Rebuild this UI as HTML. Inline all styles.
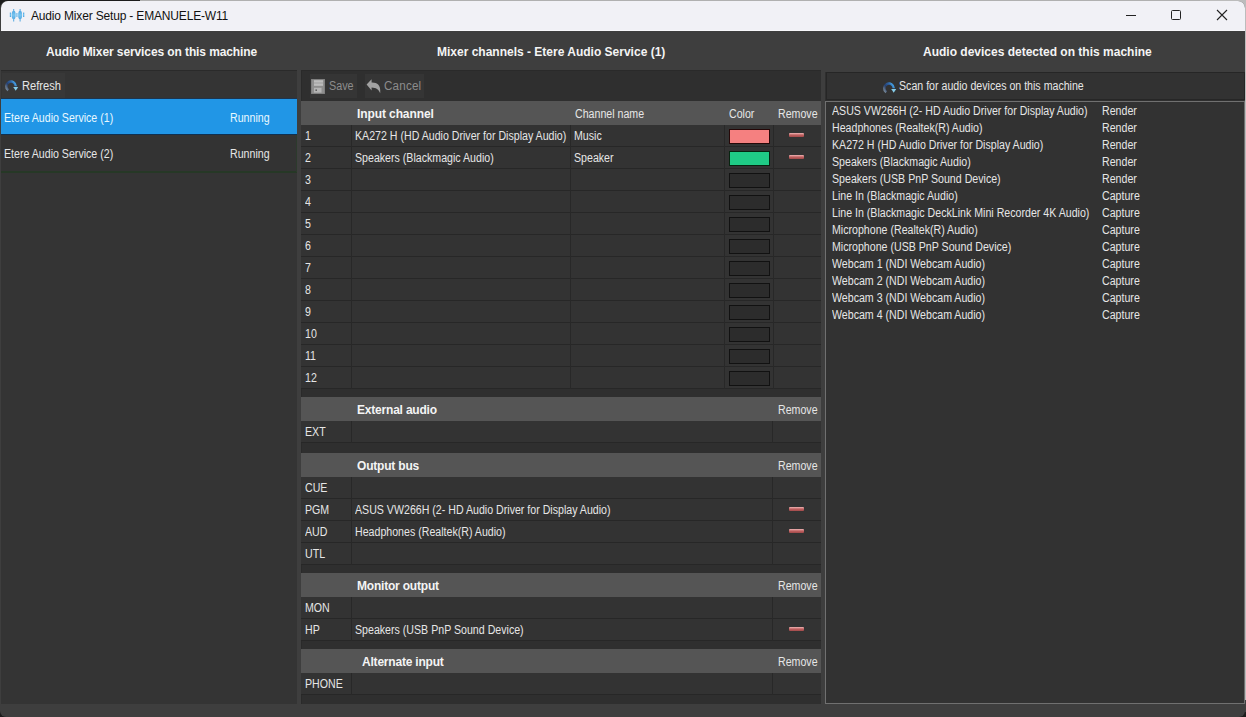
<!DOCTYPE html><html><head><meta charset="utf-8"><style>
*{margin:0;padding:0;box-sizing:border-box}
html,body{width:1246px;height:717px;overflow:hidden;background:#c9c9c9;font-family:"Liberation Sans",sans-serif;position:relative}
.a{position:absolute}
.t{position:absolute;white-space:nowrap;font-size:12px;color:#e6e6e6;line-height:14px;transform:scaleX(0.885);transform-origin:0 0}
.hb{position:absolute;white-space:nowrap;font-size:12px;font-weight:bold;color:#f4f4f4;letter-spacing:-0.15px;line-height:14px}
.sw{position:absolute;width:41px;height:15px;border:1px solid #111}
.rm{position:absolute;width:15px;height:4px;background:linear-gradient(#f0b8b8,#c06060 50%,#a04a4a);border-radius:1px}
</style></head><body>
<div class="a" style="left:0px;top:0px;width:1246px;height:717px;background:#1c1c1c;"></div>
<div class="a" style="left:1245px;top:0px;width:1px;height:700px;background:#bcbcbc;"></div>
<div class="a" style="left:140px;top:0px;width:1106px;height:1px;background:#b0b0b0;"></div>
<div class="a" style="left:1200px;top:0px;width:46px;height:30px;background:#bcbcbc;"></div>
<div class="a" style="left:0px;top:1px;width:1245px;height:716px;background:#3e3e3e;border-radius:7px 7px 6px 6px"></div>
<div class="a" style="left:1240px;top:700px;width:6px;height:12px;background:#3e3e3e;"></div>
<div class="a" style="left:1px;top:1px;width:1244px;height:30px;background:#f1f1f6;border-radius:7px 7px 0 0"></div>
<div class="a" style="left:1px;top:30px;width:1244px;height:1px;background:#f7f7fa;"></div>
<svg class="a" style="left:0;top:0" width="30" height="30" viewBox="0 0 30 30"><defs><linearGradient id="wg" x1="0" y1="0" x2="0" y2="1"><stop offset="0" stop-color="#4aa3de"/><stop offset=".5" stop-color="#78c4f0"/><stop offset="1" stop-color="#4aa3de"/></linearGradient></defs><g fill="url(#wg)"><rect x="9.8" y="12.6" width="1.3" height="4.4"/><ellipse cx="13.7" cy="15" rx="2" ry="4.3"/><rect x="13.2" y="9" width="1" height="12.5"/><rect x="16.3" y="13.2" width="1.2" height="3.6"/><ellipse cx="20.1" cy="15" rx="2" ry="4.3"/><rect x="19.6" y="9" width="1" height="12.5"/><rect x="23" y="12.6" width="1.3" height="4.4"/></g></svg>
<div class="a" style="left:31px;top:9px;font-size:12px;color:#111;white-space:nowrap;letter-spacing:-0.17px;line-height:14px">Audio Mixer Setup - EMANUELE-W11</div>
<div class="a" style="left:1126px;top:15px;width:10px;height:1px;background:#222;"></div>
<div class="a" style="left:1171px;top:10px;width:10px;height:10px;border:1px solid #222;border-radius:1.5px"></div>
<svg class="a" style="left:1216px;top:9px" width="12" height="12" viewBox="0 0 12 12"><path d="M1 1L11 11M11 1L1 11" stroke="#222" stroke-width="1.1"/></svg>
<div class="hb" style="left:46px;top:45px;letter-spacing:-0.1px">Audio Mixer services on this machine</div>
<div class="hb" style="left:437px;top:45px;letter-spacing:0">Mixer channels - Etere Audio Service (1)</div>
<div class="hb" style="left:923px;top:45px;letter-spacing:0">Audio devices detected on this machine</div>
<div class="a" style="left:1px;top:70px;width:296px;height:634px;background:#343434;"></div>
<div class="a" style="left:1px;top:70px;width:296px;height:1px;background:#2a2a2a;"></div>
<div class="a" style="left:2px;top:73px;width:63px;height:25px;background:#383838;"></div>
<svg class="a" style="left:2px;top:77px" width="20" height="20" viewBox="0 0 20 20"><defs><linearGradient id="rg2" x1="0" y1="1" x2="1" y2="0.4"><stop offset="0" stop-color="#80909c"/><stop offset=".4" stop-color="#263f6e"/><stop offset=".8" stop-color="#2e64a6"/><stop offset="1" stop-color="#4196d8"/></linearGradient></defs><path d="M6.30 13.15A4.7 4.7 0 1 1 13.70 9.30" fill="none" stroke="url(#rg2)" stroke-width="2.5"/><path d="M11.20 9.90H16.20L13.70 13.70Z" fill="#86cce8"/></svg>
<div class="t" style="left:22px;top:79px;transform:scaleX(0.93)">Refresh</div>
<div class="a" style="left:1px;top:98px;width:296px;height:1px;background:#1c3550;"></div>
<div class="a" style="left:1px;top:99px;width:296px;height:36px;background:#2196e6;"></div>
<div class="a" style="left:1px;top:134px;width:296px;height:1px;background:#0f3050;"></div>
<div class="t" style="left:4px;top:111px;color:#e8f8ff">Etere Audio Service (1)</div>
<div class="t" style="left:230px;top:111px;color:#e8f8ff">Running</div>
<div class="a" style="left:1px;top:135px;width:296px;height:36px;background:#333333;"></div>
<div class="t" style="left:4px;top:147px;">Etere Audio Service (2)</div>
<div class="t" style="left:230px;top:147px;">Running</div>
<div class="a" style="left:1px;top:171px;width:296px;height:2px;background:#263826;"></div>
<div class="a" style="left:296px;top:135px;width:1px;height:37px;background:#2c3a2c;"></div>
<div class="a" style="left:301px;top:70px;width:520px;height:634px;background:#2f2f2f;"></div>
<div class="a" style="left:301px;top:70px;width:520px;height:1px;background:#2a2a2a;"></div>
<div class="a" style="left:301px;top:70px;width:1px;height:634px;background:#2a2a2a;"></div>
<div class="a" style="left:310px;top:74px;width:47px;height:24px;background:#353535;"></div>
<svg class="a" style="left:311px;top:79px" width="14" height="15" viewBox="0 0 14 15"><rect x="0" y="0" width="14" height="15" fill="#7a7a7a"/><rect x="0.7" y="0.7" width="12.6" height="13.6" fill="#8e8e8e"/><rect x="3" y="1.2" width="9" height="5.6" fill="#bdbdbd"/><rect x="3" y="3.6" width="9" height="0.8" fill="#9a9a9a"/><rect x="3" y="8.8" width="7.5" height="4.8" fill="#b5b5b5"/><rect x="4.5" y="10.4" width="1.4" height="1.6" fill="#555"/></svg>
<div class="t" style="left:329px;top:79px;color:#8c8c8c;transform:scaleX(0.9)">Save</div>
<div class="a" style="left:365px;top:74px;width:59px;height:24px;background:#353535;"></div>
<svg class="a" style="left:366px;top:78px" width="16" height="16" viewBox="0 0 16 16"><path d="M0.6 6.6L5.6 1.2V4.6C11 4.4 15 7 14.2 15.2C12.8 11.2 10 9.6 5.6 9.4V12.4Z" fill="#a2a2a2"/></svg>
<div class="t" style="left:384px;top:79px;color:#8c8c8c;transform:scaleX(0.97);letter-spacing:0.2px">Cancel</div>
<div class="a" style="left:301px;top:101px;width:520px;height:24px;background:#555555;"></div>
<div class="hb" style="left:357px;top:107px;letter-spacing:-0.1px">Input channel</div>
<div class="t" style="left:575px;top:107px;">Channel name</div>
<div class="t" style="left:729px;top:107px;">Color</div>
<div class="t" style="left:778px;top:107px;">Remove</div>
<div class="a" style="left:301px;top:125px;width:520px;height:22px;background:#333333;"></div>
<div class="a" style="left:301px;top:146px;width:520px;height:1px;background:#272727;"></div>
<div class="a" style="left:351px;top:125px;width:1px;height:22px;background:#282828;"></div>
<div class="a" style="left:570px;top:125px;width:1px;height:22px;background:#282828;"></div>
<div class="a" style="left:724px;top:125px;width:1px;height:22px;background:#282828;"></div>
<div class="a" style="left:773px;top:125px;width:1px;height:22px;background:#282828;"></div>
<div class="t" style="left:305px;top:129px;">1</div>
<div class="t" style="left:355px;top:129px;">KA272 H (HD Audio Driver for Display Audio)</div>
<div class="t" style="left:574px;top:129px;">Music</div>
<div class="sw" style="left:729px;top:129px;background:#f58080;border-color:#260808"></div>
<div class="rm" style="left:789px;top:133px"></div>
<div class="a" style="left:301px;top:147px;width:520px;height:22px;background:#333333;"></div>
<div class="a" style="left:301px;top:168px;width:520px;height:1px;background:#272727;"></div>
<div class="a" style="left:351px;top:147px;width:1px;height:22px;background:#282828;"></div>
<div class="a" style="left:570px;top:147px;width:1px;height:22px;background:#282828;"></div>
<div class="a" style="left:724px;top:147px;width:1px;height:22px;background:#282828;"></div>
<div class="a" style="left:773px;top:147px;width:1px;height:22px;background:#282828;"></div>
<div class="t" style="left:305px;top:151px;">2</div>
<div class="t" style="left:355px;top:151px;">Speakers (Blackmagic Audio)</div>
<div class="t" style="left:574px;top:151px;">Speaker</div>
<div class="sw" style="left:729px;top:151px;background:#1fcb86;border-color:#062410"></div>
<div class="rm" style="left:789px;top:155px"></div>
<div class="a" style="left:301px;top:169px;width:520px;height:22px;background:#333333;"></div>
<div class="a" style="left:301px;top:190px;width:520px;height:1px;background:#272727;"></div>
<div class="a" style="left:351px;top:169px;width:1px;height:22px;background:#282828;"></div>
<div class="a" style="left:570px;top:169px;width:1px;height:22px;background:#282828;"></div>
<div class="a" style="left:724px;top:169px;width:1px;height:22px;background:#282828;"></div>
<div class="a" style="left:773px;top:169px;width:1px;height:22px;background:#282828;"></div>
<div class="t" style="left:305px;top:173px;">3</div>
<div class="sw" style="left:729px;top:173px;background:#2c2c2c"></div>
<div class="a" style="left:301px;top:191px;width:520px;height:22px;background:#333333;"></div>
<div class="a" style="left:301px;top:212px;width:520px;height:1px;background:#272727;"></div>
<div class="a" style="left:351px;top:191px;width:1px;height:22px;background:#282828;"></div>
<div class="a" style="left:570px;top:191px;width:1px;height:22px;background:#282828;"></div>
<div class="a" style="left:724px;top:191px;width:1px;height:22px;background:#282828;"></div>
<div class="a" style="left:773px;top:191px;width:1px;height:22px;background:#282828;"></div>
<div class="t" style="left:305px;top:195px;">4</div>
<div class="sw" style="left:729px;top:195px;background:#2c2c2c"></div>
<div class="a" style="left:301px;top:213px;width:520px;height:22px;background:#333333;"></div>
<div class="a" style="left:301px;top:234px;width:520px;height:1px;background:#272727;"></div>
<div class="a" style="left:351px;top:213px;width:1px;height:22px;background:#282828;"></div>
<div class="a" style="left:570px;top:213px;width:1px;height:22px;background:#282828;"></div>
<div class="a" style="left:724px;top:213px;width:1px;height:22px;background:#282828;"></div>
<div class="a" style="left:773px;top:213px;width:1px;height:22px;background:#282828;"></div>
<div class="t" style="left:305px;top:217px;">5</div>
<div class="sw" style="left:729px;top:217px;background:#2c2c2c"></div>
<div class="a" style="left:301px;top:235px;width:520px;height:22px;background:#333333;"></div>
<div class="a" style="left:301px;top:256px;width:520px;height:1px;background:#272727;"></div>
<div class="a" style="left:351px;top:235px;width:1px;height:22px;background:#282828;"></div>
<div class="a" style="left:570px;top:235px;width:1px;height:22px;background:#282828;"></div>
<div class="a" style="left:724px;top:235px;width:1px;height:22px;background:#282828;"></div>
<div class="a" style="left:773px;top:235px;width:1px;height:22px;background:#282828;"></div>
<div class="t" style="left:305px;top:239px;">6</div>
<div class="sw" style="left:729px;top:239px;background:#2c2c2c"></div>
<div class="a" style="left:301px;top:257px;width:520px;height:22px;background:#333333;"></div>
<div class="a" style="left:301px;top:278px;width:520px;height:1px;background:#272727;"></div>
<div class="a" style="left:351px;top:257px;width:1px;height:22px;background:#282828;"></div>
<div class="a" style="left:570px;top:257px;width:1px;height:22px;background:#282828;"></div>
<div class="a" style="left:724px;top:257px;width:1px;height:22px;background:#282828;"></div>
<div class="a" style="left:773px;top:257px;width:1px;height:22px;background:#282828;"></div>
<div class="t" style="left:305px;top:261px;">7</div>
<div class="sw" style="left:729px;top:261px;background:#2c2c2c"></div>
<div class="a" style="left:301px;top:279px;width:520px;height:22px;background:#333333;"></div>
<div class="a" style="left:301px;top:300px;width:520px;height:1px;background:#272727;"></div>
<div class="a" style="left:351px;top:279px;width:1px;height:22px;background:#282828;"></div>
<div class="a" style="left:570px;top:279px;width:1px;height:22px;background:#282828;"></div>
<div class="a" style="left:724px;top:279px;width:1px;height:22px;background:#282828;"></div>
<div class="a" style="left:773px;top:279px;width:1px;height:22px;background:#282828;"></div>
<div class="t" style="left:305px;top:283px;">8</div>
<div class="sw" style="left:729px;top:283px;background:#2c2c2c"></div>
<div class="a" style="left:301px;top:301px;width:520px;height:22px;background:#333333;"></div>
<div class="a" style="left:301px;top:322px;width:520px;height:1px;background:#272727;"></div>
<div class="a" style="left:351px;top:301px;width:1px;height:22px;background:#282828;"></div>
<div class="a" style="left:570px;top:301px;width:1px;height:22px;background:#282828;"></div>
<div class="a" style="left:724px;top:301px;width:1px;height:22px;background:#282828;"></div>
<div class="a" style="left:773px;top:301px;width:1px;height:22px;background:#282828;"></div>
<div class="t" style="left:305px;top:305px;">9</div>
<div class="sw" style="left:729px;top:305px;background:#2c2c2c"></div>
<div class="a" style="left:301px;top:323px;width:520px;height:22px;background:#333333;"></div>
<div class="a" style="left:301px;top:344px;width:520px;height:1px;background:#272727;"></div>
<div class="a" style="left:351px;top:323px;width:1px;height:22px;background:#282828;"></div>
<div class="a" style="left:570px;top:323px;width:1px;height:22px;background:#282828;"></div>
<div class="a" style="left:724px;top:323px;width:1px;height:22px;background:#282828;"></div>
<div class="a" style="left:773px;top:323px;width:1px;height:22px;background:#282828;"></div>
<div class="t" style="left:305px;top:327px;">10</div>
<div class="sw" style="left:729px;top:327px;background:#2c2c2c"></div>
<div class="a" style="left:301px;top:345px;width:520px;height:22px;background:#333333;"></div>
<div class="a" style="left:301px;top:366px;width:520px;height:1px;background:#272727;"></div>
<div class="a" style="left:351px;top:345px;width:1px;height:22px;background:#282828;"></div>
<div class="a" style="left:570px;top:345px;width:1px;height:22px;background:#282828;"></div>
<div class="a" style="left:724px;top:345px;width:1px;height:22px;background:#282828;"></div>
<div class="a" style="left:773px;top:345px;width:1px;height:22px;background:#282828;"></div>
<div class="t" style="left:305px;top:349px;">11</div>
<div class="sw" style="left:729px;top:349px;background:#2c2c2c"></div>
<div class="a" style="left:301px;top:367px;width:520px;height:22px;background:#333333;"></div>
<div class="a" style="left:301px;top:388px;width:520px;height:1px;background:#272727;"></div>
<div class="a" style="left:351px;top:367px;width:1px;height:22px;background:#282828;"></div>
<div class="a" style="left:570px;top:367px;width:1px;height:22px;background:#282828;"></div>
<div class="a" style="left:724px;top:367px;width:1px;height:22px;background:#282828;"></div>
<div class="a" style="left:773px;top:367px;width:1px;height:22px;background:#282828;"></div>
<div class="t" style="left:305px;top:371px;">12</div>
<div class="sw" style="left:729px;top:371px;background:#2c2c2c"></div>
<div class="a" style="left:301px;top:397px;width:520px;height:24px;background:#555555;"></div>
<div class="hb" style="left:357px;top:403px;letter-spacing:-0.2px">External audio</div>
<div class="t" style="left:778px;top:403px;">Remove</div>
<div class="a" style="left:301px;top:421px;width:520px;height:22px;background:#333333;"></div>
<div class="a" style="left:301px;top:442px;width:520px;height:1px;background:#272727;"></div>
<div class="a" style="left:351px;top:421px;width:1px;height:22px;background:#282828;"></div>
<div class="a" style="left:772px;top:421px;width:1px;height:22px;background:#282828;"></div>
<div class="t" style="left:305px;top:425px;">EXT</div>
<div class="a" style="left:301px;top:453px;width:520px;height:24px;background:#555555;"></div>
<div class="hb" style="left:357px;top:459px;letter-spacing:-0.2px">Output bus</div>
<div class="t" style="left:778px;top:459px;">Remove</div>
<div class="a" style="left:301px;top:477px;width:520px;height:22px;background:#333333;"></div>
<div class="a" style="left:301px;top:498px;width:520px;height:1px;background:#272727;"></div>
<div class="a" style="left:351px;top:477px;width:1px;height:22px;background:#282828;"></div>
<div class="a" style="left:772px;top:477px;width:1px;height:22px;background:#282828;"></div>
<div class="t" style="left:305px;top:481px;">CUE</div>
<div class="a" style="left:301px;top:499px;width:520px;height:22px;background:#333333;"></div>
<div class="a" style="left:301px;top:520px;width:520px;height:1px;background:#272727;"></div>
<div class="a" style="left:351px;top:499px;width:1px;height:22px;background:#282828;"></div>
<div class="a" style="left:772px;top:499px;width:1px;height:22px;background:#282828;"></div>
<div class="t" style="left:305px;top:503px;">PGM</div>
<div class="t" style="left:355px;top:503px;">ASUS VW266H (2- HD Audio Driver for Display Audio)</div>
<div class="rm" style="left:789px;top:507px"></div>
<div class="a" style="left:301px;top:521px;width:520px;height:22px;background:#333333;"></div>
<div class="a" style="left:301px;top:542px;width:520px;height:1px;background:#272727;"></div>
<div class="a" style="left:351px;top:521px;width:1px;height:22px;background:#282828;"></div>
<div class="a" style="left:772px;top:521px;width:1px;height:22px;background:#282828;"></div>
<div class="t" style="left:305px;top:525px;">AUD</div>
<div class="t" style="left:355px;top:525px;">Headphones (Realtek(R) Audio)</div>
<div class="rm" style="left:789px;top:529px"></div>
<div class="a" style="left:301px;top:543px;width:520px;height:22px;background:#333333;"></div>
<div class="a" style="left:301px;top:564px;width:520px;height:1px;background:#272727;"></div>
<div class="a" style="left:351px;top:543px;width:1px;height:22px;background:#282828;"></div>
<div class="a" style="left:772px;top:543px;width:1px;height:22px;background:#282828;"></div>
<div class="t" style="left:305px;top:547px;">UTL</div>
<div class="a" style="left:301px;top:573px;width:520px;height:24px;background:#555555;"></div>
<div class="hb" style="left:357px;top:579px;letter-spacing:-0.2px">Monitor output</div>
<div class="t" style="left:778px;top:579px;">Remove</div>
<div class="a" style="left:301px;top:597px;width:520px;height:22px;background:#333333;"></div>
<div class="a" style="left:301px;top:618px;width:520px;height:1px;background:#272727;"></div>
<div class="a" style="left:351px;top:597px;width:1px;height:22px;background:#282828;"></div>
<div class="a" style="left:772px;top:597px;width:1px;height:22px;background:#282828;"></div>
<div class="t" style="left:305px;top:601px;">MON</div>
<div class="a" style="left:301px;top:619px;width:520px;height:22px;background:#333333;"></div>
<div class="a" style="left:301px;top:640px;width:520px;height:1px;background:#272727;"></div>
<div class="a" style="left:351px;top:619px;width:1px;height:22px;background:#282828;"></div>
<div class="a" style="left:772px;top:619px;width:1px;height:22px;background:#282828;"></div>
<div class="t" style="left:305px;top:623px;">HP</div>
<div class="t" style="left:355px;top:623px;">Speakers (USB PnP Sound Device)</div>
<div class="rm" style="left:789px;top:627px"></div>
<div class="a" style="left:301px;top:649px;width:520px;height:24px;background:#555555;"></div>
<div class="hb" style="left:362px;top:655px;letter-spacing:-0.2px">Alternate input</div>
<div class="t" style="left:778px;top:655px;">Remove</div>
<div class="a" style="left:301px;top:673px;width:520px;height:22px;background:#333333;"></div>
<div class="a" style="left:301px;top:694px;width:520px;height:1px;background:#272727;"></div>
<div class="a" style="left:351px;top:673px;width:1px;height:22px;background:#282828;"></div>
<div class="a" style="left:772px;top:673px;width:1px;height:22px;background:#282828;"></div>
<div class="t" style="left:305px;top:677px;">PHONE</div>
<div class="a" style="left:825px;top:72px;width:419px;height:632px;background:#2f2f2f;"></div>
<div class="a" style="left:826px;top:72px;width:419px;height:28px;background:#323232;border:1px solid #262626"></div>
<svg class="a" style="left:880px;top:78.5px" width="20" height="20" viewBox="0 0 20 20"><defs><linearGradient id="rg880" x1="0" y1="1" x2="1" y2="0.4"><stop offset="0" stop-color="#80909c"/><stop offset=".4" stop-color="#263f6e"/><stop offset=".8" stop-color="#2e64a6"/><stop offset="1" stop-color="#4196d8"/></linearGradient></defs><path d="M6.30 13.15A4.7 4.7 0 1 1 13.70 9.30" fill="none" stroke="url(#rg880)" stroke-width="2.5"/><path d="M11.20 9.90H16.20L13.70 13.70Z" fill="#86cce8"/></svg>
<div class="t" style="left:899px;top:79px;">Scan for audio devices on this machine</div>
<div class="a" style="left:825px;top:101px;width:420px;height:603px;background:#323232;border:1px solid #707070"></div>
<div class="t" style="left:832px;top:104px;">ASUS VW266H (2- HD Audio Driver for Display Audio)</div>
<div class="t" style="left:1102px;top:104px;">Render</div>
<div class="t" style="left:832px;top:121px;">Headphones (Realtek(R) Audio)</div>
<div class="t" style="left:1102px;top:121px;">Render</div>
<div class="t" style="left:832px;top:138px;">KA272 H (HD Audio Driver for Display Audio)</div>
<div class="t" style="left:1102px;top:138px;">Render</div>
<div class="t" style="left:832px;top:155px;">Speakers (Blackmagic Audio)</div>
<div class="t" style="left:1102px;top:155px;">Render</div>
<div class="t" style="left:832px;top:172px;">Speakers (USB PnP Sound Device)</div>
<div class="t" style="left:1102px;top:172px;">Render</div>
<div class="t" style="left:832px;top:189px;">Line In (Blackmagic Audio)</div>
<div class="t" style="left:1102px;top:189px;">Capture</div>
<div class="t" style="left:832px;top:206px;">Line In (Blackmagic DeckLink Mini Recorder 4K Audio)</div>
<div class="t" style="left:1102px;top:206px;">Capture</div>
<div class="t" style="left:832px;top:223px;">Microphone (Realtek(R) Audio)</div>
<div class="t" style="left:1102px;top:223px;">Capture</div>
<div class="t" style="left:832px;top:240px;">Microphone (USB PnP Sound Device)</div>
<div class="t" style="left:1102px;top:240px;">Capture</div>
<div class="t" style="left:832px;top:257px;">Webcam 1 (NDI Webcam Audio)</div>
<div class="t" style="left:1102px;top:257px;">Capture</div>
<div class="t" style="left:832px;top:274px;">Webcam 2 (NDI Webcam Audio)</div>
<div class="t" style="left:1102px;top:274px;">Capture</div>
<div class="t" style="left:832px;top:291px;">Webcam 3 (NDI Webcam Audio)</div>
<div class="t" style="left:1102px;top:291px;">Capture</div>
<div class="t" style="left:832px;top:308px;">Webcam 4 (NDI Webcam Audio)</div>
<div class="t" style="left:1102px;top:308px;">Capture</div>
</body></html>
